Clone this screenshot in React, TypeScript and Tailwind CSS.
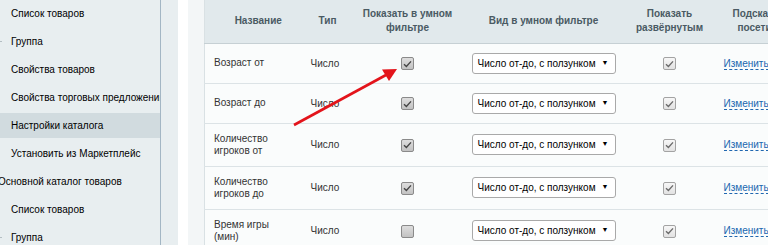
import { memo } from "react";

// Элементы левого меню
const menu = [
  { label: "Список товаров", level: 1 },
  { label: "Группа", level: 1, dash: true },
  { label: "Свойства товаров", level: 1 },
  { label: "Свойства торговых предложений", level: 1 },
  { label: "Настройки каталога", level: 1, active: true },
  { label: "Установить из Маркетплейс", level: 1 },
  { label: "Основной каталог товаров", level: 0 },
  { label: "Список товаров", level: 1 },
  { label: "Группа", level: 1, dash: true },
];

const rows = [
  { name: ["Возраст от"], smart: true },
  { name: ["Возраст до"], smart: true },
  { name: ["Количество", "игроков от"], smart: true },
  { name: ["Количество", "игроков до"], smart: true },
  { name: ["Время игры", "(мин)"], smart: false },
];

const Checkbox = ({ checked, light }: { checked: boolean; light?: boolean }) => (
  <span
    className={
      light
        ? "inline-flex h-[13px] w-[13px] items-center justify-center rounded-[2px] border border-[#a3a3a3] bg-gradient-to-b from-[#f7f7f7] to-[#e2e2e2] align-middle"
        : "inline-flex h-[13px] w-[13px] items-center justify-center rounded-[2px] border border-[#8a8a8a] bg-gradient-to-b from-[#dedede] to-[#c2c2c2] align-middle"
    }
  >
    {checked && (
      <svg width="9" height="8" viewBox="0 0 9 8">
        <path
          d="M1 4.2 L3.4 6.4 L8 1.4"
          fill="none"
          stroke={light ? "#6b6b6b" : "#454545"}
          strokeWidth="1.4"
        />
      </svg>
    )}
  </span>
);

const Select = () => (
  <div className="mx-auto flex h-[21px] w-[144px] items-center justify-between whitespace-nowrap rounded-[3px] border border-[#a9a9a9] bg-white pl-[5px] pr-[6px] text-black">
    <span>Число от-до, с ползунком</span>
    <span className="text-[7px]">▼</span>
  </div>
);

const Sidebar = memo(() => (
  <aside className="flex w-[178px] shrink-0 bg-[#e8eef0]">
    <nav className="w-[161px] shrink-0 overflow-hidden border-r border-[#a3b6c4] pt-[1px]">
      {menu.map((item, i) => (
        <div
          key={i}
          className={`relative mb-[3px] flex h-[25px] items-center whitespace-nowrap text-black ${
            item.active ? "bg-[#d1dbdf]" : ""
          } ${item.level === 0 ? "-ml-[2px] pl-0" : "pl-[11px]"}`}
        >
          {item.dash && (
            <span className="absolute left-0 top-[12px] h-px w-[2px] bg-[#b4bec3]" />
          )}
          {item.label}
        </div>
      ))}
    </nav>
  </aside>
));

Sidebar.displayName = "Sidebar";

const PropsTable = memo(() => (
  <table className="w-[609px] table-fixed border-collapse border-l border-[#d9e1e4] bg-[#fafcfc]">
    <colgroup>
      <col className="w-[103px]" />
      <col className="w-[40px]" />
      <col className="w-[120px]" />
      <col className="w-[152px]" />
      <col className="w-[100px]" />
      <col className="w-[94px]" />
    </colgroup>
    <thead>
      <tr className="h-[43px] border-b border-[#c6d0d4] bg-[#e1e9ec] leading-[14px] text-[#4a5a63]">
        <th className="pl-[4px] font-bold">Название</th>
        <th className="font-bold">Тип</th>
        <th className="font-bold">
          Показать в умном
          <br />
          фильтре
        </th>
        <th className="font-bold">Вид в умном фильтре</th>
        <th className="font-bold">
          Показать
          <br />
          развёрнутым
        </th>
        <th className="whitespace-nowrap pl-[6px] text-left font-bold">
          <div className="ml-[7px]">Подсказка</div>
          <div className="ml-[12px]">посетителю</div>
        </th>
      </tr>
    </thead>
    <tbody>
      {rows.map((r, i) => (
        <tr key={i} className="border-b border-[#dce3e6] text-[#333]">
          <td className="py-[9px] pl-[9px] leading-[12px]">
            {r.name.map((n, j) => (
              <div key={j}>{n}</div>
            ))}
          </td>
          <td className="py-[9px] pl-[3px]">Число</td>
          <td className="py-[9px] text-center">
            <Checkbox checked={r.smart} />
          </td>
          <td className="py-[9px]">
            <Select />
          </td>
          <td className="py-[9px] text-center">
            <Checkbox checked light />
          </td>
          <td className="whitespace-nowrap py-[9px] pl-[4px]">
            <span className="border-b border-dashed border-[#2067b0] text-[#2067b0]">
              Изменить
            </span>
          </td>
        </tr>
      ))}
    </tbody>
  </table>
));

PropsTable.displayName = "PropsTable";

const App = memo(() => (
  <div
    className="relative flex h-[245px] w-[768px] overflow-hidden bg-[#f3f6f7] text-[10px]"
    style={{ fontFamily: '"Liberation Sans", Arial, sans-serif' }}
  >
    <Sidebar />
    <div className="w-[10px] shrink-0 bg-white" />
    <main className="min-w-0 flex-1 pl-[16px]">
      <PropsTable />
    </main>

    {/* красная стрелка поверх таблицы */}
    <svg className="pointer-events-none absolute left-0 top-0" width="768" height="245">
      <line x1="294" y1="125" x2="386" y2="75" stroke="#e3141b" strokeWidth="2.6" />
      <polygon points="397,69 382,69.5 389,81" fill="#e3141b" />
    </svg>
  </div>
));

App.displayName = "App";

export default App;
